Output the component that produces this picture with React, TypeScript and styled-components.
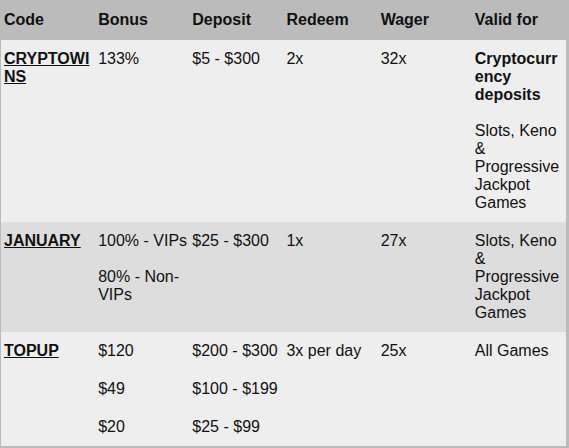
import React from "react";
import styled, { createGlobalStyle } from "styled-components";

const GlobalStyle = createGlobalStyle`
  html, body {
    margin: 0;
    padding: 0;
    background: #ffffff;
  }
  body {
    font-family: "Liberation Sans", Arial, sans-serif;
    font-size: 16px;
    color: #111111;
  }
`;

const Frame = styled.div`
  background: #bbbbbb;
  padding: 0 3px 3px 1px;
`;

const Table = styled.table`
  width: 100%;
  table-layout: fixed;
  border-collapse: collapse;
  border-spacing: 0;
  font-family: "Liberation Sans", Arial, sans-serif;
  font-size: 16px;
  line-height: 18px;
  color: #111111;
`;

const HeadCell = styled.th`
  text-align: left;
  font-weight: bold;
  padding: 11px 1px 11px 3px;
  vertical-align: top;
  color: #111111;
`;

const Row = styled.tr<{ $shade: "light" | "dark" }>`
  background: ${(p) => (p.$shade === "dark" ? "#dddddd" : "#eeeeee")};
`;

const Cell = styled.td`
  padding: 10px 1px 10px 3px;
  vertical-align: top;
  overflow-wrap: break-word;
  word-wrap: break-word;
`;

const CodeLink = styled.a`
  font-weight: bold;
  color: #111111;
  text-decoration: underline;
`;

const Strong = styled.strong`
  font-weight: bold;
`;

const Stack = styled.div`
  display: flex;
  flex-direction: column;
  gap: 20px;
`;

type Offer = {
  code: string;
  shade: "light" | "dark";
  bonus: React.ReactNode;
  deposit: React.ReactNode;
  redeem: string;
  wager: string;
  valid: React.ReactNode;
};

const offers: Offer[] = [
  {
    code: "CRYPTOWINS",
    shade: "light",
    bonus: "133%",
    deposit: "$5 - $300",
    redeem: "2x",
    wager: "32x",
    valid: (
      <>
        <Strong>Cryptocurrency deposits</Strong>
        <br />
        <br />
        Slots, Keno &amp; Progressive Jackpot Games
      </>
    ),
  },
  {
    code: "JANUARY",
    shade: "dark",
    bonus: (
      <>
        100% - VIPs
        <br />
        <br />
        80% - Non-VIPs
      </>
    ),
    deposit: "$25 - $300",
    redeem: "1x",
    wager: "27x",
    valid: "Slots, Keno & Progressive Jackpot Games",
  },
  {
    code: "TOPUP",
    shade: "light",
    bonus: (
      <Stack>
        <span>$120</span>
        <span>$49</span>
        <span>$20</span>
      </Stack>
    ),
    deposit: (
      <Stack>
        <span>$200 - $300</span>
        <span>$100 - $199</span>
        <span>$25 - $99</span>
      </Stack>
    ),
    redeem: "3x per day",
    wager: "25x",
    valid: "All Games",
  },
];

const headers = ["Code", "Bonus", "Deposit", "Redeem", "Wager", "Valid for"];

export default function App() {
  return (
    <>
      <GlobalStyle />
      <Frame>
        <Table>
          <thead>
            <tr>
              {headers.map((h) => (
                <HeadCell key={h}>{h}</HeadCell>
              ))}
            </tr>
          </thead>
          <tbody>
            {offers.map((o) => (
              <Row key={o.code} $shade={o.shade}>
                <Cell>
                  <CodeLink href="#">{o.code}</CodeLink>
                </Cell>
                <Cell>{o.bonus}</Cell>
                <Cell>{o.deposit}</Cell>
                <Cell>{o.redeem}</Cell>
                <Cell>{o.wager}</Cell>
                <Cell>{o.valid}</Cell>
              </Row>
            ))}
          </tbody>
        </Table>
      </Frame>
    </>
  );
}
